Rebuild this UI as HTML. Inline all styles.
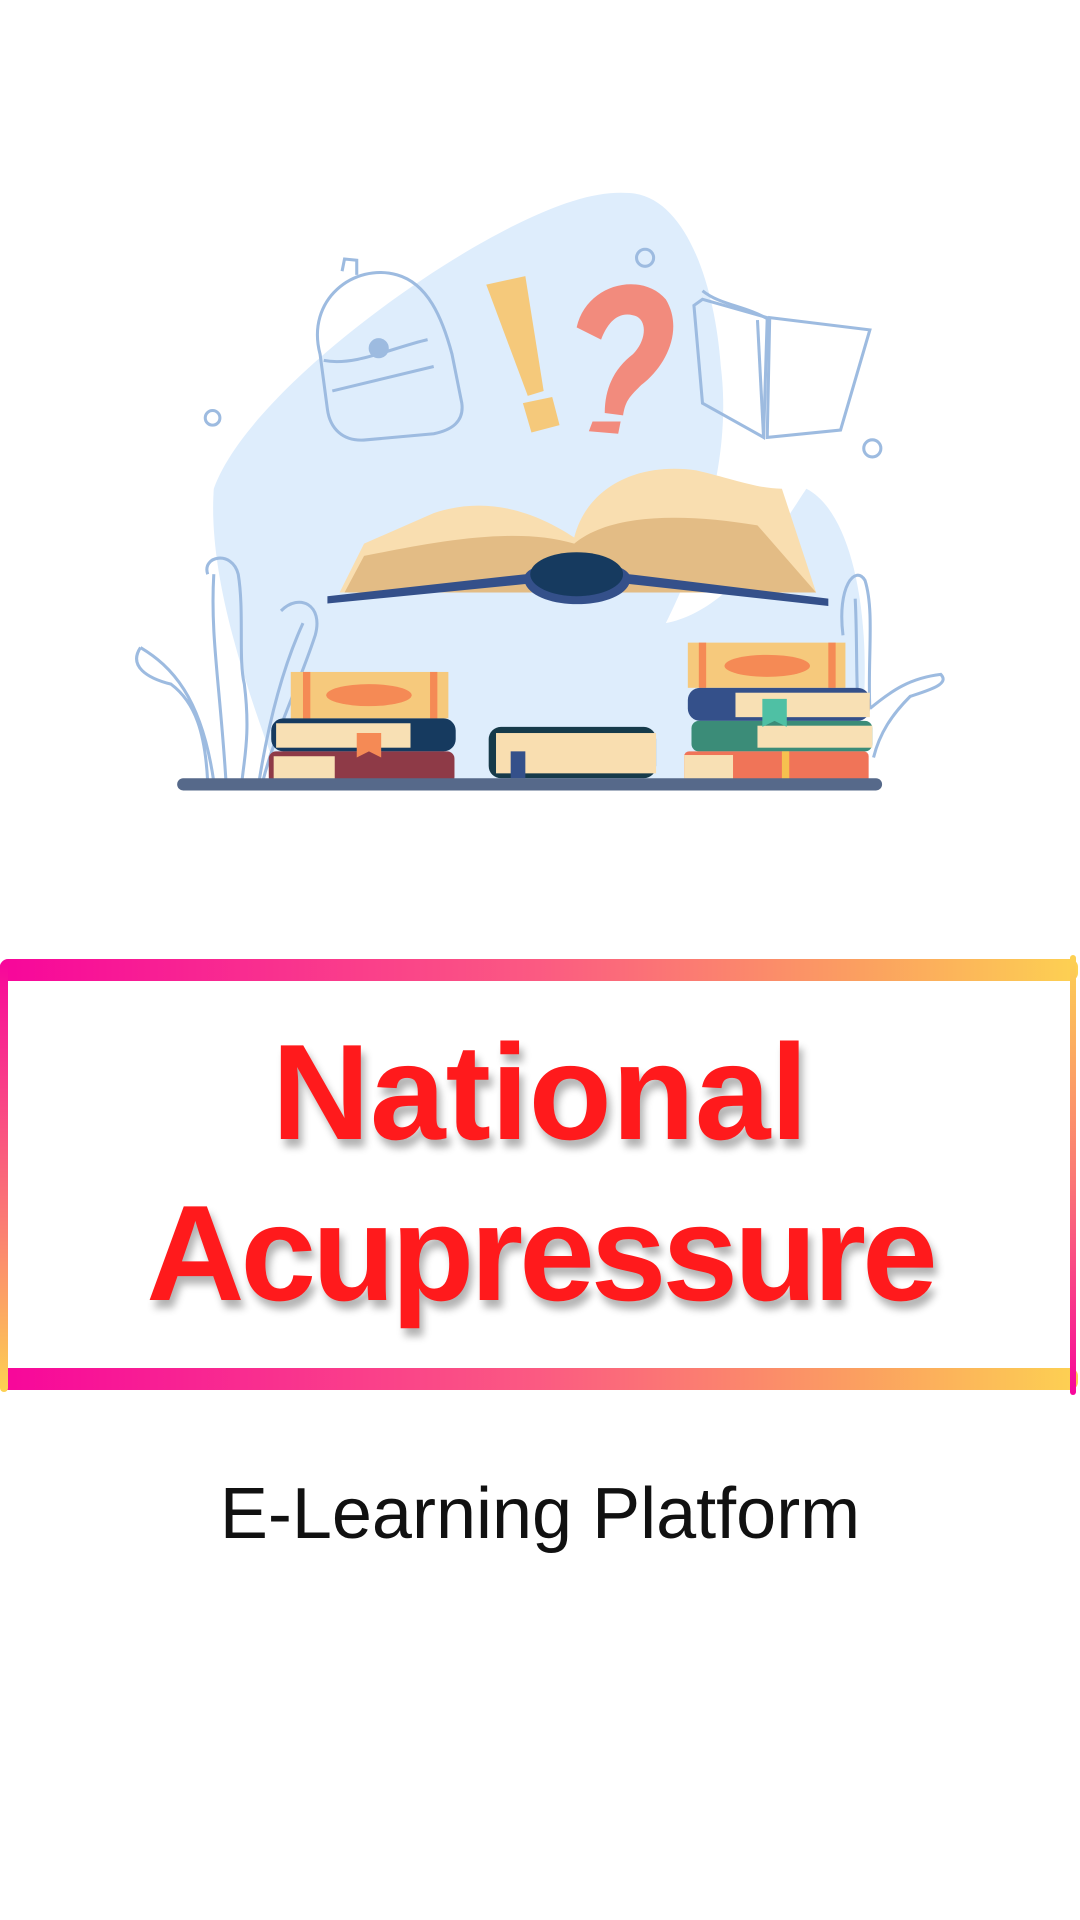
<!DOCTYPE html>
<html><head><meta charset="utf-8"><style>
html,body{margin:0;padding:0;background:#fff;width:1080px;height:1920px;overflow:hidden;position:relative;font-family:"Liberation Sans",sans-serif}
svg.ill{position:absolute;left:0;top:0}
.top,.bot{position:absolute;left:0;width:1078px;height:22px;background:linear-gradient(90deg,#f7069b,#fb5a82 50%,#fba060 80%,#fdd152);border-radius:8px}
.top{top:959px}.bot{top:1368px}
.l{position:absolute;left:0;top:962px;width:8px;height:430px;background:linear-gradient(180deg,#f7069b,#fb7a74 60%,#fdd152);border-radius:4px}
.r{position:absolute;left:1070px;top:955px;width:6px;height:440px;background:linear-gradient(180deg,#fdd152,#fb7a74 50%,#f7069b);border-radius:3px}
.t{position:absolute;left:0;width:1080px;text-align:center;color:#ff1a1c;font-weight:bold;font-size:136px;line-height:1;text-shadow:4px 8px 8px rgba(0,0,0,.3)}
.sub{position:absolute;left:0;width:1080px;text-align:center;top:1478px;font-size:72px;line-height:1;color:#111}
</style></head><body>
<svg class="ill" width="1080" height="1080" viewBox="0 0 884 884">
<path d="M515 158 C560 160 585 230 590 300 C600 380 570 460 545 510 C600 500 640 430 660 400 C700 420 720 520 700 640 L230 640 C200 560 170 470 175 400 C200 330 330 230 420 185 C460 165 490 156 515 158Z" fill="#deedfc"/>
<g fill="none" stroke="#9dbbe0" stroke-width="2.5">
<circle cx="174" cy="342" r="6"/><circle cx="528" cy="211" r="7"/><circle cx="714" cy="367" r="7"/>
<path d="M262 290 C250 245 290 215 325 225 C350 232 362 260 370 290 L378 330 C380 345 370 352 355 355 L300 360 C280 362 270 350 268 335Z"/>
<path d="M265 295 C290 300 320 285 350 278"/><path d="M272 320 L355 300"/>
<circle cx="310" cy="285" r="7" fill="#9dbbe0"/>
<path d="M280 222 L282 212 L292 213 L292 225"/>
<path d="M568 250 L575 330 L625 358 L628 260 L575 245Z"/>
<path d="M630 260 L712 270 L688 352 L628 358Z"/>
<path d="M620 262 L625 358"/>
<path d="M575 238 C590 250 610 250 630 262"/>
<path d="M115 530 C140 545 165 570 175 640 M115 530 C105 545 120 555 140 560 C160 575 168 600 170 640 M170 470 C165 455 190 450 195 470 C200 500 195 540 200 560 C205 600 200 620 198 640 M175 470 C172 520 180 560 185 640 M230 500 C245 485 265 495 258 520 C245 560 225 600 215 640 M212 640 C220 590 232 545 248 510"/>
<path d="M690 520 C685 480 700 462 708 475 C716 500 710 540 712 580 M700 490 C702 530 700 560 704 600 M712 580 C730 565 745 555 770 552 C778 560 760 565 745 570 C730 585 720 600 715 620"/>
</g>
<path d="M398 233 L430 226 L445 320 L432 324Z" fill="#f5c97b"/>
<path d="M428 330 L452 325 L458 348 L435 354Z" fill="#f5c97b"/>
<path d="M472 268 C480 232 525 222 545 245 C560 270 545 300 525 315 C515 325 512 328 510 340 L495 338 C495 315 505 300 518 290 C530 278 530 260 518 258 C505 255 497 265 492 278Z M485 345 L508 345 L506 355 L482 353Z" fill="#f28b7d"/>
<path d="M278 485 L298 445 L355 420 C400 405 440 420 470 440 C480 400 520 378 570 385 C600 392 620 400 640 400 L668 485Z" fill="#f9deb0"/>
<path d="M282 485 L298 455 C350 445 420 430 470 445 C500 420 560 420 620 430 L668 485Z" fill="#e3bc85"/>
<path d="M268 488 L430 470 C440 455 505 455 515 470 L678 490 L678 496 L515 478 C505 500 440 500 430 478 L268 494Z" fill="#34508a"/>
<ellipse cx="472" cy="470" rx="38" ry="18" fill="#163a5f"/>
<rect x="238" y="550" width="129" height="38" fill="#f6c97c"/><rect x="248" y="550" width="6" height="38" fill="#f58a55"/><rect x="352" y="550" width="6" height="38" fill="#f58a55"/><ellipse cx="302" cy="569" rx="35" ry="9" fill="#f58a55"/>
<rect x="222" y="588" width="151" height="27" rx="10" fill="#163a5f"/><rect x="226" y="592" width="110" height="20" fill="#f8e0b4"/>
<rect x="220" y="615" width="152" height="27" rx="6" fill="#8e3a47"/><rect x="224" y="619" width="50" height="20" fill="#f8e0b4"/>
<path d="M292 600 L312 600 L312 620 L302 615 L292 620Z" fill="#f58a55"/>
<rect x="400" y="595" width="137" height="42" rx="10" fill="#163a4a"/><rect x="406" y="600" width="131" height="33" fill="#f9deb0"/><rect x="418" y="615" width="12" height="22" fill="#34508a"/>
<rect x="563" y="526" width="129" height="37" fill="#f6c97c"/><rect x="572" y="526" width="6" height="37" fill="#f58a55"/><rect x="678" y="526" width="6" height="37" fill="#f58a55"/><ellipse cx="628" cy="545" rx="35" ry="9" fill="#f58a55"/>
<rect x="563" y="563" width="149" height="27" rx="10" fill="#34508a"/><rect x="602" y="567" width="110" height="20" fill="#f8e0b4"/>
<rect x="566" y="590" width="148" height="25" rx="6" fill="#3b8c78"/><rect x="620" y="594" width="94" height="18" fill="#f8e0b4"/>
<path d="M624 572 L644 572 L644 595 L634 590 L624 595Z" fill="#4fc0a4"/>
<rect x="560" y="615" width="151" height="28" rx="4" fill="#f07458"/><rect x="560" y="618" width="40" height="22" fill="#f8e0b4"/><rect x="640" y="615" width="6" height="28" fill="#f6c04f"/>
<rect x="145" y="637" width="577" height="10" rx="5" fill="#56698a"/>
</svg>
<div class="top"></div><div class="bot"></div><div class="l"></div><div class="r"></div>
<div class="t" style="top:1024px">National</div>
<div class="t" style="top:1185px;letter-spacing:-4px">Acupressure</div>
<div class="sub">E-Learning Platform</div>
</body></html>
